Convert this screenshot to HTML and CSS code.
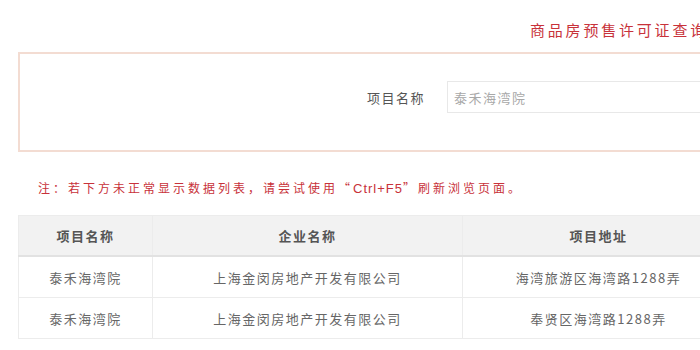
FILE: index.html
```html
<!DOCTYPE html>
<html lang="zh-CN">
<head>
<meta charset="utf-8">
<title>商品房预售许可证查询</title>
<link rel="stylesheet" href="styles.css">
</head>
<body>
<div class="page">
  <div class="title">商品房预售许可证查询</div>
  <div class="search-box">
    <div class="field">
      <label class="field-label">项目名称</label>
      <input class="field-input" type="text" placeholder="泰禾海湾院">
    </div>
  </div>
  <p class="note">注：若下方未正常显示数据列表，请尝试使用“<span class="key">Ctrl+F5</span>”刷新浏览页面。</p>
  <table class="result">
    <colgroup>
      <col class="c1"><col class="c2"><col class="c3">
    </colgroup>
    <thead>
      <tr><th>项目名称</th><th>企业名称</th><th>项目地址</th></tr>
    </thead>
    <tbody>
      <tr><td>泰禾海湾院</td><td>上海金闵房地产开发有限公司</td><td>海湾旅游区海湾路1288弄</td></tr>
      <tr><td>泰禾海湾院</td><td>上海金闵房地产开发有限公司</td><td>奉贤区海湾路1288弄</td></tr>
    </tbody>
  </table>
</div>
</body>
</html>
```

FILE: styles.css
```css
html, body {
  margin: 0;
  padding: 0;
  background: #ffffff;
  overflow: hidden;
}
body {
  font-family: "Noto Sans CJK SC", "Noto Sans", sans-serif;
}
.page {
  width: 1202px;
  margin-left: 18px;
}
.title {
  margin-top: 20px;
  height: 20px;
  line-height: 20px;
  font-size: 15px;
  letter-spacing: 2.8px;
  color: #c8323a;
  text-align: center;
  margin-bottom: 12px;
}
.search-box {
  box-sizing: border-box;
  height: 100px;
  border: 2px solid #f3dcd2;
  padding-top: 27px;
  padding-left: 347px;
}
.field {
  display: flex;
  align-items: center;
  gap: 22px;
}
.field-label {
  font-size: 13px;
  letter-spacing: 1.5px;
  color: #555;
}
.field-input {
  box-sizing: border-box;
  width: 420px;
  height: 32px;
  border: 1px solid #e8e8e8;
  padding: 0 6px;
  font-family: "Noto Sans CJK SC", "Noto Sans", sans-serif;
  font-size: 13px;
  letter-spacing: 1.5px;
  outline: none;
}
.field-input::placeholder {
  color: #a8a8a8;
}
.note {
  margin: 26px 0 17px 20px;
  height: 20px;
  line-height: 20px;
  font-size: 12px;
  letter-spacing: 3px;
  color: #c8323a;
}
.key {
  font-family: "Liberation Sans", sans-serif;
  font-size: 13px;
  letter-spacing: 1px;
}
.result {
  border-collapse: collapse;
  table-layout: fixed;
  width: 716px;
  font-size: 13px;
  letter-spacing: 1.5px;
}
.c1 { width: 134px; }
.c2 { width: 310px; }
.c3 { width: 272px; }
.result th,
.result td {
  border: 1px solid #ececec;
  text-align: center;
  padding: 0;
}
.result th {
  height: 39px;
  background: #f2f2f2;
  color: #555;
  font-weight: bold;
  border-bottom: 2px solid #e2e2e2;
}
.result td {
  height: 40px;
  color: #666;
}
```
